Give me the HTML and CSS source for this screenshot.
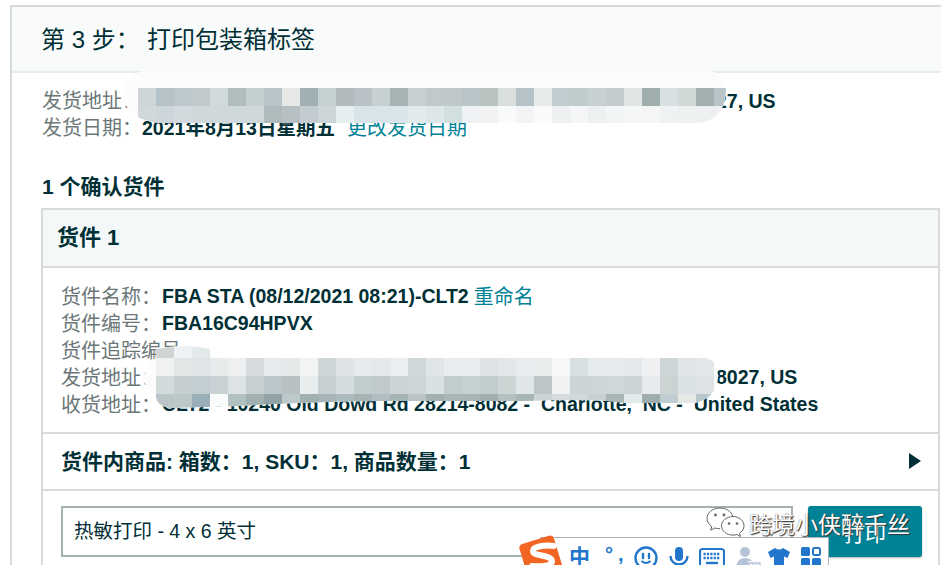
FILE: index.html
```html
<!DOCTYPE html>
<html lang="zh-CN">
<head>
<meta charset="utf-8">
<title>第 3 步：打印包装箱标签</title>
<link rel="stylesheet" href="styles.css">
</head>
<body>
<main class="page">
  <section class="panel">
    <header class="panel-head">
      <h1 class="step-title"><span class="step-no">第 3 步：</span><span>打印包装箱标签</span></h1>
    </header>
    <div class="panel-body">
      <div class="row row-top"><span class="label label-top">发货地址：</span><b class="value tail-top">27, US</b></div>
      <div class="row"><span class="label label-top">发货日期：</span><b class="value">2021年8月13日星期五</b><a class="link link-date" href="#">更改发货日期</a></div>
      <h2 class="confirm">1 个确认货件</h2>
      <article class="card">
        <h3 class="card-head">货件 1</h3>
        <div class="card-info">
          <div class="row"><span class="label">货件名称：</span><b class="value">FBA STA (08/12/2021 08:21)-CLT2</b><a class="link link-rename" href="#">重命名</a></div>
          <div class="row"><span class="label">货件编号：</span><b class="value">FBA16C94HPVX</b></div>
          <div class="row"><span class="label">货件追踪编号</span></div>
          <div class="row"><span class="label">发货地址：</span><b class="value tail-ship">8027, US</b></div>
          <div class="row"><span class="label">收货地址：</span><b class="value">CLT2 - 10240 Old Dowd Rd 28214-8082 -&nbsp; Charlotte,&nbsp; NC -&nbsp; United States</b></div>
        </div>
        <div class="card-items">
          <b>货件内商品: 箱数：1, SKU：1, 商品数量：1</b>
          <span class="arrow"></span>
        </div>
        <div class="card-print">
          <div class="select">热敏打印 - 4 x 6 英寸<span class="chevron"></span></div>
          <button class="print-btn" type="button">打印</button>
        </div>
      </article>
    </div>
  </section>

  <svg class="mosaic" viewBox="0 0 941 565" width="941" height="565" aria-hidden="true">
    <defs>
      <clipPath id="clip-a"><path d="M150 70H705Q726 72 726 92Q724 122 695 123H160Q126 120 123 95Q125 72 150 70Z"/></clipPath>
      <clipPath id="clip-b"><path d="M156 349Q185 343 210 349V358H706Q718 360 718 378Q716 398 695 403H625Q600 398 520 401H380Q300 402 240 406L170 408Q155 405 156 395Q144 390 144 376Q146 362 156 358Z"/></clipPath>
    </defs>
    <g clip-path="url(#clip-a)">
      <rect class="m-base" x="120" y="68" width="610" height="58"/>
      <g class="m-row" transform="translate(0 88)">
        <rect x="138" fill="#cdd5d6"/><rect x="156" fill="#b5c2c7"/><rect x="174" fill="#bcc8cd"/><rect x="192" fill="#c1cbcc"/><rect x="210" fill="#d0d9db"/><rect x="228" fill="#afbdbe"/><rect x="246" fill="#c4cfd0"/><rect x="264" fill="#bac5ca"/><rect x="282" fill="#e6e8e5"/><rect x="300" fill="#a0b0b3"/><rect x="318" fill="#c6d1d3"/><rect x="336" fill="#b1babc"/><rect x="354" fill="#b9c3c7"/><rect x="372" fill="#c7d1d2"/><rect x="390" fill="#a7b4b4"/><rect x="408" fill="#c8d0d2"/><rect x="426" fill="#c1c9ca"/><rect x="444" fill="#c0c9ca"/><rect x="462" fill="#b9c4ca"/><rect x="480" fill="#b9c3c2"/><rect x="498" fill="#d8dfde"/><rect x="516" fill="#b5c2c7"/><rect x="534" fill="#e6eaea"/><rect x="552" fill="#c0cccf"/><rect x="570" fill="#c0cbcb"/><rect x="588" fill="#c8d1d1"/><rect x="606" fill="#c3cdcf"/><rect x="624" fill="#e0e5e4"/><rect x="642" fill="#a0adad"/><rect x="660" fill="#d8e0e2"/><rect x="678" fill="#d1d9d8"/><rect x="696" fill="#a3afaf"/><rect x="714" fill="#b9c4c9"/>
      </g>
      <g class="m-row" transform="translate(0 106)">
        <rect x="138" fill="#d0d8d9"/><rect x="156" fill="#cdd7db"/><rect x="174" fill="#d2dadd"/><rect x="192" fill="#cfd8da"/><rect x="210" fill="#cfd8db"/><rect x="228" fill="#cfd8da"/><rect x="246" fill="#d0d8da"/><rect x="264" fill="#aebabc"/><rect x="282" fill="#b6c0c3"/><rect x="300" fill="#c3cdd1"/><rect x="318" fill="#ccd5d7"/><rect x="336" fill="#e6eeef"/><rect x="354" fill="#d8e4e8"/><rect x="372" fill="#d8e4e9"/><rect x="390" fill="#d9e5ea"/><rect x="408" fill="#e2eaec"/><rect x="426" fill="#dde7e9"/><rect x="444" fill="#d2dfdf"/><rect x="462" fill="#eff2f4"/><rect x="480" fill="#f0f2f3"/><rect x="498" fill="#f9fafa"/><rect x="516" fill="#f2f4f6"/><rect x="534" fill="#fafafa"/><rect x="552" fill="#edf0f1"/><rect x="570" fill="#f4f6f7"/><rect x="588" fill="#ecf0f0"/><rect x="606" fill="#f2f5f6"/><rect x="624" fill="#f5f7f7"/><rect x="642" fill="#f4f6f6"/><rect x="660" fill="#eff2f3"/><rect x="678" fill="#eef1f2"/><rect x="696" fill="#ecf0f1"/><rect x="714" fill="#eef1f2"/>
      </g>
    </g>
    <g clip-path="url(#clip-b)">
      <rect class="m-base" x="140" y="340" width="582" height="72"/>
      <g class="m-row" transform="translate(0 340)">
        <rect x="156" fill="#d0d4d4"/><rect x="174" fill="#eef2f5"/><rect x="192" fill="#e3e8ea"/>
      </g>
      <g class="m-row" transform="translate(0 358)">
        <rect x="156" fill="#f0f2f2"/><rect x="174" fill="#e2e6e7"/><rect x="192" fill="#dfe4e6"/><rect x="210" fill="#e8ebec"/><rect x="228" fill="#eeeff1"/><rect x="246" fill="#d6dbdd"/><rect x="264" fill="#e7eaec"/><rect x="282" fill="#e5e8e9"/><rect x="300" fill="#f2f4f4"/><rect x="318" fill="#ced6d8"/><rect x="336" fill="#dde3e6"/><rect x="354" fill="#e6eaec"/><rect x="372" fill="#e4e8ea"/><rect x="390" fill="#ebeef0"/><rect x="408" fill="#d0d8da"/><rect x="426" fill="#e0e6e8"/><rect x="444" fill="#e8ecee"/><rect x="462" fill="#e8ecee"/><rect x="480" fill="#dde3e5"/><rect x="498" fill="#e3e7e9"/><rect x="516" fill="#e8ecee"/><rect x="534" fill="#e8eced"/><rect x="552" fill="#f6f7f7"/><rect x="570" fill="#d8e0e3"/><rect x="588" fill="#e5eaec"/><rect x="606" fill="#e5eaec"/><rect x="624" fill="#e3e8ea"/><rect x="642" fill="#eef0f2"/><rect x="660" fill="#ced5d6"/><rect x="678" fill="#e0e5e8"/><rect x="696" fill="#e2e7e9"/>
      </g>
      <g class="m-row" transform="translate(0 376)">
        <rect x="156" fill="#d2dadb"/><rect x="174" fill="#c6cecf"/><rect x="192" fill="#c2ced2"/><rect x="210" fill="#c8d2d5"/><rect x="228" fill="#dde2e4"/><rect x="246" fill="#c6cfd1"/><rect x="264" fill="#b9c7cd"/><rect x="282" fill="#b8c0c1"/><rect x="300" fill="#e8edee"/><rect x="318" fill="#c8d0d3"/><rect x="336" fill="#d4dcde"/><rect x="354" fill="#c2cdcf"/><rect x="372" fill="#c0cacb"/><rect x="390" fill="#ccd4d6"/><rect x="408" fill="#ccd6d6"/><rect x="426" fill="#d8e0e2"/><rect x="444" fill="#c2cdcf"/><rect x="462" fill="#c5d0d1"/><rect x="480" fill="#c0cccd"/><rect x="498" fill="#cdd5d4"/><rect x="516" fill="#e0e6e8"/><rect x="534" fill="#bcc6c7"/><rect x="552" fill="#f0f2f2"/><rect x="570" fill="#ccd4d5"/><rect x="588" fill="#cdd6d7"/><rect x="606" fill="#d0d7d8"/><rect x="624" fill="#cbd3d4"/><rect x="642" fill="#e6eaec"/><rect x="660" fill="#ccd3d3"/><rect x="678" fill="#dbe2e5"/><rect x="696" fill="#dde3e4"/>
      </g>
      <g class="m-row" transform="translate(0 394)">
        <rect x="156" fill="#b9c5c7"/><rect x="174" fill="#bcc7c7"/><rect x="192" fill="#99aeb6"/><rect x="210" fill="#fafbfb"/><rect x="228" fill="#b3c0c2"/><rect x="246" fill="#a1b0b1"/><rect x="264" fill="#91a3a7"/><rect x="282" fill="#bcc9cb"/><rect x="300" fill="#a2b0b1"/><rect x="318" fill="#a6b4ba"/><rect x="336" fill="#abbabd"/><rect x="354" fill="#a6b4b5"/><rect x="372" fill="#b1bdc0"/><rect x="390" fill="#a4b3b3"/><rect x="408" fill="#bac4c7"/><rect x="426" fill="#a2b0b2"/><rect x="444" fill="#a9b6b8"/><rect x="462" fill="#a9b6b8"/><rect x="480" fill="#a0aeb0"/><rect x="498" fill="#b4bfc0"/><rect x="516" fill="#a8b5b5"/><rect x="534" fill="#ccd4d5"/><rect x="552" fill="#d5dbdc"/><rect x="570" fill="#d0d8d8"/><rect x="588" fill="#c8d2d2"/><rect x="606" fill="#aab6b6"/><rect x="624" fill="#e4e9ec"/><rect x="642" fill="#a0adad"/><rect x="660" fill="#c0ced3"/><rect x="678" fill="#e6e8e5"/><rect x="696" fill="#b9c7cc"/>
      </g>
    </g>
  </svg>

  <div class="ime">
    <span class="ime-zh">中</span>
    <span class="ime-punct">°,</span>
    <svg class="ime-icon" width="24" height="24" viewBox="0 0 24 24"><circle cx="12" cy="12" r="10.5" fill="none" stroke="#2277cc" stroke-width="2.4"/><path d="M9 8v4M15 8v4" stroke="#2277cc" stroke-width="2.4" stroke-linecap="round"/><path d="M7.5 15q4.500 4 9 0" fill="none" stroke="#2277cc" stroke-width="2"/></svg>
    <svg class="ime-icon" width="20" height="24" viewBox="0 0 20 24"><rect x="6" y="1" width="8" height="14" rx="4" fill="#2277cc"/><path d="M1.500 10a8.500 8.500 0 0 0 17 0" fill="none" stroke="#2277cc" stroke-width="2.400"/><path d="M10 18v6" stroke="#2277cc" stroke-width="3"/></svg>
    <svg class="ime-icon" width="26" height="24" viewBox="0 0 26 24"><rect x="1" y="3" width="24" height="19" rx="2.500" fill="none" stroke="#2277cc" stroke-width="2.200"/><path d="M4.500 8h17M4.500 12h17" stroke="#2277cc" stroke-width="2.400" stroke-dasharray="2.200 1.200"/><path d="M7 17h12" stroke="#2277cc" stroke-width="2.400"/></svg>
    <svg class="ime-icon" width="26" height="24" viewBox="0 0 26 24"><circle cx="10" cy="6" r="5" fill="#b3c3d8"/><path d="M1 24q0-12 9-12q5 0 7 3h-4v9z" fill="#b3c3d8"/><rect x="14" y="17" width="11" height="7" fill="none" stroke="#b3c3d8" stroke-width="1.500"/><path d="M18 18v6M21.500 18v6" stroke="#b3c3d8" stroke-width="1.500"/></svg>
    <svg class="ime-icon" width="24" height="24" viewBox="0 0 24 24"><path d="M8 2q4 3 8 0l7 4-2.500 6-3.500-1.500V24H7V10.500L3.500 12 1 6z" fill="#2277cc"/></svg>
    <svg class="ime-icon" width="20" height="24" viewBox="0 0 20 24"><rect x="0" y="1" width="9" height="9" rx="1.500" fill="#2277cc"/><rect x="12" y="2" width="7" height="7" rx="1.500" fill="none" stroke="#2277cc" stroke-width="2"/><rect x="0" y="12" width="9" height="12" rx="1.500" fill="#2277cc"/><rect x="11" y="12" width="9" height="12" rx="1.500" fill="#2277cc"/></svg>
  </div>
  <svg class="ime-logo" width="48" height="36" viewBox="0 0 48 36" aria-hidden="true">
    <rect x="5" y="4" width="36" height="44" rx="4" transform="rotate(-17 23 26)" fill="#f26522"/>
    <path d="M35 11C26 10 14 11 14 16C14 22 32 19 33 26C33 31 22 32 13 31" fill="none" stroke="#fff" stroke-width="6" stroke-linecap="round"/>
  </svg>

  <div class="watermark">
    <svg class="wechat" width="40" height="32" viewBox="0 0 40 32" aria-hidden="true">
      <path d="M14 1C6.500 1 1 5.800 1 11.500c0 3.300 1.900 6 4.800 8l-1.200 3.700 4.300-2.200c1.600.4 3.300.7 5.100.7" fill="#fff" stroke="#666" stroke-width="1"/>
      <path d="M14 1c6.500 0 11.500 3.600 12.700 8.200" fill="#fff" stroke="#666" stroke-width="1"/>
      <circle cx="9.500" cy="8" r="1.400" fill="#666"/><circle cx="18" cy="8" r="1.400" fill="#666"/>
      <path d="M27 9.500c-6.500 0-11.500 4.200-11.500 9.300s5 9.300 11.500 9.300c1.500 0 2.800-.2 4-.6l3.500 2-1-3.200c2.800-1.700 4.500-4.400 4.500-7.500 0-5.100-5-9.300-11-9.300z" fill="#fff" stroke="#666" stroke-width="1"/>
      <circle cx="23" cy="16.500" r="1.300" fill="#666"/><circle cx="31" cy="16.500" r="1.300" fill="#666"/>
    </svg>
    <span class="wm-text">跨境小侠醉千丝</span>
  </div>
</main>
</body>
</html>
```
FILE: styles.css
```css
* { box-sizing: border-box; }
html, body { margin: 0; padding: 0; background: #fff; }
body {
  width: 941px;
  height: 565px;
  overflow: hidden;
  font-family: "Liberation Sans", "Noto Sans CJK SC", sans-serif;
  font-size: 20px;
  color: #002f36;
}
.page { position: relative; width: 941px; height: 565px; overflow: hidden; padding-top: 5px; }
.panel { margin-left: 10px; width: 931px; height: 570px; border-top: 2px solid #d5dbdb; border-left: 2px solid #d5dbdb; }
.panel-head { height: 66px; display: flex; align-items: center; padding-left: 29px; padding-top: 2px; background: #f9fafa; border-bottom: 2px solid #e7ecec; }
.step-title { margin: 0; font-size: 24px; font-weight: 400; line-height: 32px; display: flex; }
.step-no { width: 106px; }
.panel-body { padding: 15px 0 0 29px; }
.row { display: flex; height: 27px; line-height: 27px; white-space: nowrap; }
.label { flex: none; width: 101px; color: #6c7778; }
.label-top { width: 100px; margin-left: 1px; }
.value { font-weight: 700; font-size: 19.5px; }
.card-info .value { line-height: 25px; }
.tail-top { margin-left: 574px; }
.tail-ship { margin-left: 554px; }
.link { color: #008296; text-decoration: none; }
.link-date { margin-left: 12px; }
.link-rename { margin-left: 5px; }
.confirm { margin: 32px 0 9px; padding-left: 1px; font-size: 21px; line-height: 25px; font-weight: 700; }
.card { height: 360px; margin-right: 1px; border: solid #d9dbdb; border-width: 2px 2px 0 2px; }
.card-head { margin: 0; height: 58px; line-height: 56px; padding-left: 14px; font-size: 22px; font-weight: 700; background: #f5f8f9; border-bottom: 2px solid #d9dbdb; }
.card-info { padding: 16px 0 13px 18px; border-bottom: 2px solid #d9dbdb; }
.card-items { height: 57px; display: flex; align-items: center; justify-content: space-between; padding: 0 17px 4px 18px; border-bottom: 2px solid #d9dbdb; font-size: 21px; }
.card-items .arrow { margin-top: 2px; }
.arrow { width: 0; height: 0; border-left: 12px solid #002f36; border-top: 8px solid transparent; border-bottom: 8px solid transparent; }
.card-print { display: flex; gap: 15px; padding: 15px 0 0 18px; }
.select { position: relative; width: 732px; height: 51px; line-height: 47px; padding-left: 11px; border: 2px solid #a6b2b2; background: #fff; font-size: 19.5px; }
.chevron { position: absolute; right: 15px; top: 19px; width: 9px; height: 9px; border-right: 2px solid #7d8b8d; border-bottom: 2px solid #7d8b8d; transform: rotate(45deg) scale(.8); }
.print-btn { width: 114px; height: 51px; padding: 0; border: 0; border-radius: 3px; background: #008296; color: #fff; font: inherit; font-size: 21px; box-shadow: 0 1px 2px rgba(0,0,0,.3); }
.mosaic { position: absolute; left: 0; top: 0; pointer-events: none; }
.m-base { fill: #fcfcfc; }
.m-row rect { width: 18px; height: 18px; y: 0; }
.ime { position: absolute; left: 540px; top: 537px; width: 289px; height: 28px; padding: 10px 0 0 29px; background: #fff; border: solid #a9b3b5; border-width: 1px 1px 0 0; display: grid; grid-template-columns: 34px 31px 35px 30px 36px 32px 34px 20px; align-items: start; color: #2277cc; }
.ime-zh { font-size: 21px; font-weight: 700; line-height: 17px; }
.ime-punct { font-size: 20px; font-weight: 700; line-height: 12px; letter-spacing: 5px; padding-left: 2px; }
.ime-icon { display: block; margin-top: -2px; }
.ime-logo { position: absolute; left: 518.5px; top: 534.5px; overflow: visible; }
.watermark { position: absolute; left: 706px; top: 507px; display: flex; align-items: center; gap: 3px; }
.wm-text { font-family: "Noto Sans CJK SC", sans-serif; font-size: 23px; line-height: 32px; color: #fff; text-shadow: 1px 1px 1px #333, 0 0 1px #555; white-space: nowrap; }
```
